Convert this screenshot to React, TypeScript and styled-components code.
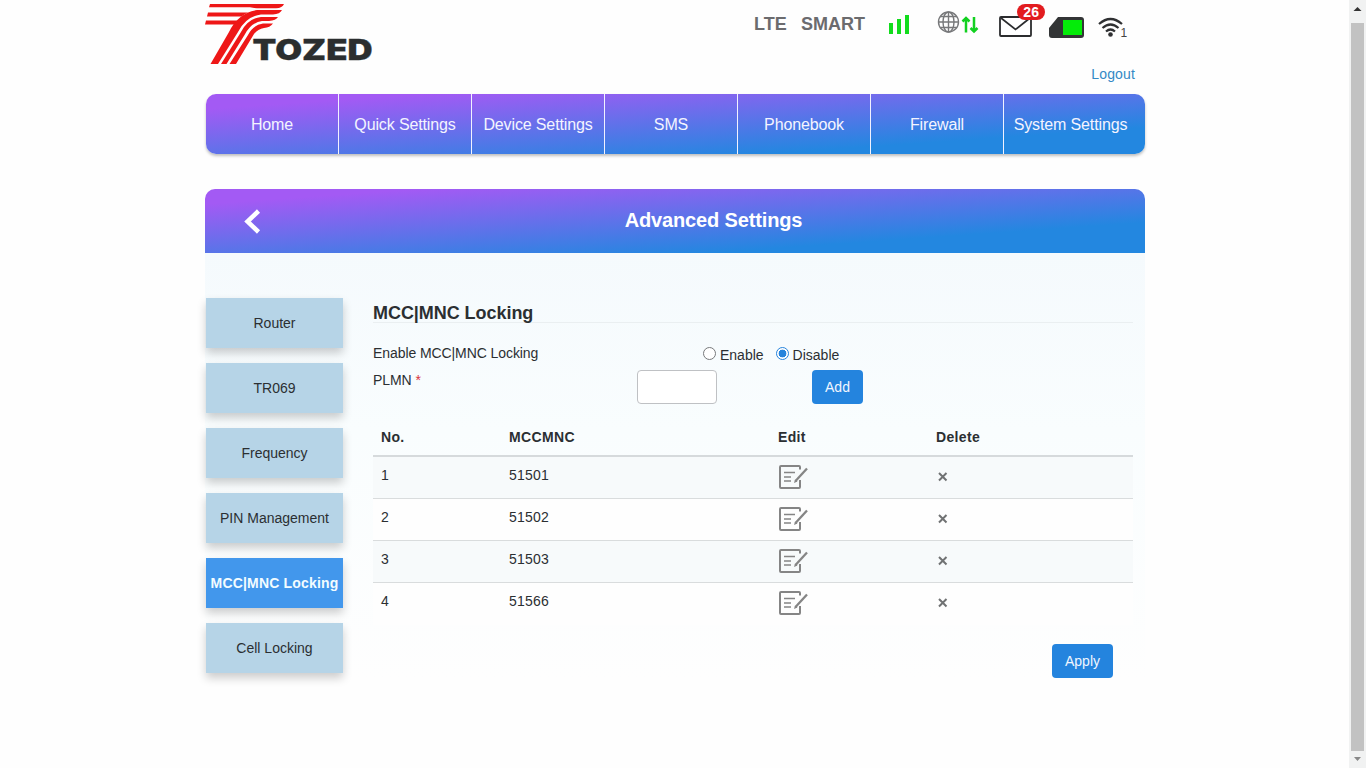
import React, { useState } from "react";
import styled, { createGlobalStyle, css } from "styled-components";

const GlobalStyle = createGlobalStyle`
  * { box-sizing: border-box; }
  body {
    margin: 0;
    background: #fefefe;
    color: #2b2f32;
    font: 14px/20px "Liberation Sans", Arial, sans-serif;
    overflow: hidden;
  }
`;

const Window = styled.div`
  display: flex;
  height: 768px;
`;
const Page = styled.div`
  flex: 1;
`;
const Container = styled.div`
  width: 940px;
  margin-left: 205px;
`;

/* Scroll bar */
const ScrollTrack = styled.div`
  width: 17px;
  height: 768px;
  padding: 0 2px;
  background: #f1f2f2;
  display: flex;
  flex-direction: column;
  align-items: center;
`;
const ScrollArrow = styled.svg<{ $h: number }>`
  display: block;
  width: 13px;
  height: ${(p) => p.$h}px;
  flex: none;
`;
const ScrollThumb = styled.div`
  width: 13px;
  flex: 1;
  background: #c2c2c2;
`;

/* Header */
const Header = styled.header`
  height: 94px;
  display: flex;
  justify-content: space-between;
`;
const Logo = styled.svg`
  display: block;
  width: 170px;
  height: 70px;
`;
const HeaderSide = styled.div`
  display: flex;
  flex-direction: column;
  width: 391px;
`;
const StatusBar = styled.div`
  display: flex;
  height: 64px;
`;
const Network = styled.span<{ $w: number }>`
  width: ${(p) => p.$w}px;
  padding-top: 14px;
  font-size: 18px;
  font-weight: 700;
  color: #6b6b6e;
  white-space: nowrap;
`;
const StatusIcons = styled.svg`
  display: block;
  width: 250px;
  height: 46px;
`;
const Logout = styled.a`
  align-self: flex-end;
  margin-right: 10px;
  font-size: 14px;
  letter-spacing: 0.15px;
  color: #3389c5;
`;

const brandGradient = css`
  background: linear-gradient(176deg, #a35af4 15px, #2387e0 99px);
`;

/* Navigation */
const Nav = styled.nav`
  ${brandGradient}
  display: flex;
  height: 60px;
  margin-left: 1px;
  border-radius: 10px;
  box-shadow: 0 2px 3px rgba(0, 0, 0, 0.25);
`;
const NavItem = styled.a`
  width: 133px;
  padding-top: 21px;
  text-align: center;
  font-size: 16px;
  letter-spacing: -0.13px;
  color: #f4f4ff;
  white-space: nowrap;
  border-right: 1px solid #f2f2ff;
  &:last-child { border-right: 0; }
`;

/* Panel */
const Panel = styled.section`
  margin-top: 35px;
  height: 560px;
  background: linear-gradient(#f5fafd 64px, #f9fdfe 240px, #fefefe 490px);
  border-radius: 10px 10px 0 0;
`;
const PanelHeader = styled.div`
  ${brandGradient}
  height: 64px;
  border-radius: 10px 10px 0 0;
  display: flex;
  padding-left: 39px;
`;
const BackIcon = styled.svg`
  width: 17px;
  height: 64px;
`;
const PanelTitle = styled.h1`
  margin: 0;
  flex: 1;
  padding: 20px 0 0 21px;
  text-align: center;
  font-size: 20px;
  line-height: 23px;
  letter-spacing: -0.15px;
  color: #fff;
`;
const Body = styled.div`
  display: flex;
  padding: 45px 12px 0 1px;
  gap: 30px;
`;
const Sidebar = styled.div`
  width: 137px;
  display: flex;
  flex-direction: column;
  gap: 15px;
`;
const SideItem = styled.a<{ $active: boolean }>`
  height: 50px;
  line-height: 50px;
  text-align: center;
  white-space: nowrap;
  letter-spacing: ${(p) => (p.$active ? 0.17 : 0)}px;
  background: ${(p) => (p.$active ? "#4297ec" : "#b6d4e7")};
  color: ${(p) => (p.$active ? "#f2fcff" : "#2b2f32")};
  font-weight: ${(p) => (p.$active ? 700 : 400)};
  box-shadow: 0 5px 9px rgba(0, 0, 0, 0.2);
`;
const Content = styled.div`
  width: 760px;
`;
const Title = styled.h2`
  margin: 0;
  height: 25px;
  padding-top: 3px;
  font-size: 18px;
  line-height: 24px;
  letter-spacing: -0.05px;
  border-bottom: 1px solid #eaeff1;
`;
const FormRow = styled.div<{ $h: number; $top: number }>`
  display: flex;
  height: ${(p) => p.$h}px;
  margin-top: ${(p) => p.$top}px;
`;
const Label = styled.label<{ $w: number }>`
  width: ${(p) => p.$w}px;
  letter-spacing: -0.08px;
`;
const Required = styled.span`
  color: #d9363e;
`;
const Option = styled.label`
  display: flex;
  gap: 4px;
  margin-right: 12px;
  padding-top: 2px;
`;
const Radio = styled.span<{ $checked: boolean }>`
  width: 13px;
  height: 13px;
  margin-top: 2px;
  border-radius: 50%;
  border: 1px solid ${(p) => (p.$checked ? "#2684dc" : "#77797b")};
  background: ${(p) => (p.$checked ? "radial-gradient(circle, #2684dc 3.6px, #fff 4.2px)" : "#fff")};
`;
const PlmnInput = styled.input`
  width: 80px;
  height: 34px;
  border: 1px solid #bfc1c4;
  border-radius: 4px;
  background: #fff;
  margin-right: 95px;
`;
const Button = styled.button<{ $w: number }>`
  width: ${(p) => p.$w}px;
  height: 34px;
  padding: 0;
  border: 0;
  border-radius: 4px;
  background: #2484de;
  color: #f0f6ff;
  font: 14px "Liberation Sans", Arial, sans-serif;
`;
const Table = styled.table`
  width: 760px;
  margin-top: 14px;
  table-layout: fixed;
  border-collapse: separate;
  border-spacing: 0;
`;
const Th = styled.th<{ $w: number }>`
  width: ${(p) => p.$w}px;
  height: 39px;
  padding: 9px 8px 8px;
  text-align: left;
  letter-spacing: 0.35px;
  border-bottom: 2px solid #d6dadc;
`;
const Row = styled.tr`
  &:nth-child(odd) { background: #f7fafb; }
  &:nth-child(even) { background: #fefefe; }
  &:last-child td { border-bottom-color: transparent; }
`;
const Td = styled.td`
  height: 42px;
  padding: 8px 8px 0;
  vertical-align: top;
  letter-spacing: 0.2px;
  border-bottom: 1px solid #d9dcdd;
`;
const IconTd = styled(Td)`
  padding-top: 7px;
`;
const CellIcon = styled.svg`
  display: block;
`;
const Footer = styled.div`
  display: flex;
  justify-content: flex-end;
  margin-top: 19px;
  padding-right: 20px;
`;

const navItems = ["Home", "Quick Settings", "Device Settings", "SMS", "Phonebook", "Firewall", "System Settings"];
const sideItems = ["Router", "TR069", "Frequency", "PIN Management", "MCC|MNC Locking", "Cell Locking"];
const codes = ["51501", "51502", "51503", "51566"];

const TozedLogo = () => (
  <Logo viewBox="0 0 170 70">
    <g fill="#ee1717">
      <path d="M5 4H79Q77.500 8 71 8.300H55Q49 8.300 45 7.300H4Z" />
      <path d="M3 12.600H43Q39 14.500 36.500 16.500H2Z" />
      <path d="M1 20.600H32.500L30.500 24.600H0Z" />
      <path d="M5.500 64L24 32Q33 13 52 10H77Q75 14 68 14.500H56Q41 16.500 33 32L13 64Z" />
      <path d="M16 64L36 32Q43 18.500 56 17H73Q71 20.500 64 21H57Q46 22.500 39.500 35L21.500 64Z" />
      <path d="M24.500 64L43 35Q48 25 58 23.500H68Q65 27.500 59 28Q53 29 49 34L31 64Z" />
    </g>
    <text x="47.500" y="59.500" fill="#2b2e2f" stroke="#2b2e2f" strokeWidth="0.300" fontFamily="Inter, sans-serif" fontWeight="900" fontSize="28" textLength="120" lengthAdjust="spacingAndGlyphs">TOZED</text>
  </Logo>
);

/* Signal, internet, messages, SIM and Wi-Fi state */
const Status = () => (
  <StatusIcons viewBox="885 0 250 46">
    <g fill="#12dc1d">
      <rect x="889" y="23" width="4" height="11" />
      <rect x="897" y="19" width="4" height="15" />
      <rect x="905" y="15" width="4" height="19" />
    </g>
    <g fill="none" stroke="#77787a" strokeWidth="1.400">
      <circle cx="948.500" cy="22" r="10" />
      <ellipse cx="948.500" cy="22" rx="5.500" ry="10" />
      <path d="M948.500 12V32M938.500 22H958.500M940.500 16.500H956.500M940.500 27.500H956.500" />
    </g>
    <g fill="none" stroke="#12d020" strokeWidth="2.500">
      <path d="M966 32.500V19M962.500 21.500L966 18L969.500 21.500" />
      <path d="M974 17V31M970.500 28L974 31.500L977.500 28" />
    </g>
    <rect x="1000" y="17" width="31" height="19" rx="1" fill="#fff" stroke="#2b2c2e" strokeWidth="1.800" />
    <path d="M1001 18L1015.500 29.500L1030 18" fill="none" stroke="#2b2c2e" strokeWidth="1.700" />
    <rect x="1017" y="4" width="28" height="16" rx="8" fill="#e21c1f" />
    <text x="1031.300" y="17" textAnchor="middle" fontSize="14" fontWeight="700" fill="#fff" letterSpacing="0.300">26</text>
    <path d="M1058 17H1081Q1084 17 1084 20V35Q1084 38 1081 38H1052Q1049 38 1049 35V28Z" fill="#333536" />
    <rect x="1063" y="20" width="19" height="15" fill="#04ec09" />
    <g fill="none" stroke="#2f3032" strokeWidth="2.200">
      <path d="M1099 24Q1110.500 14 1122 24" />
      <path d="M1102.500 28Q1110.500 21 1118.500 28" />
      <path d="M1106 31.500Q1110.500 27.500 1115 31.500" />
    </g>
    <circle cx="1110.500" cy="34.500" r="2.300" fill="#2f3032" />
    <text x="1120.500" y="37" fontSize="12" fill="#444">1</text>
  </StatusIcons>
);

const EditIcon = () => (
  <CellIcon width="32" height="26" viewBox="0 0 32 26" fill="none" stroke="#858585">
    <path d="M22 5.500V3Q22 2 21 2H3Q2 2 2 3V23Q2 24 3 24H21Q22 24 22 23V16" strokeWidth="2" />
    <path d="M6 8.500H17M6 13H13M6 17H13" strokeWidth="1.700" />
    <path d="M17.500 17L29 4.500" strokeWidth="2.300" />
    <path d="M16 19L17 15.500L19.500 17.500Z" fill="#858585" stroke="none" />
  </CellIcon>
);

const DeleteIcon = () => (
  <CellIcon width="14" height="26" viewBox="0 0 14 26" fill="none" stroke="#707273" strokeWidth="2">
    <path d="M3 9L10.500 16.500M10.500 9L3 16.500" />
  </CellIcon>
);

export default function App() {
  const [locked, setLocked] = useState(false);
  return (
    <Window>
      <GlobalStyle />
      <Page>
        <Container>
          <Header>
            <TozedLogo />
            <HeaderSide>
              <StatusBar>
                <Network $w={47}>LTE</Network>
                <Network $w={84}>SMART</Network>
                <Status />
              </StatusBar>
              <Logout>Logout</Logout>
            </HeaderSide>
          </Header>
          <Nav>
            {navItems.map((item) => (
              <NavItem key={item}>{item}</NavItem>
            ))}
          </Nav>
          <Panel>
            <PanelHeader>
              <BackIcon viewBox="0 0 17 64">
                <path d="M14.500 22L3.500 32.500L14.500 43" fill="none" stroke="#fff" strokeWidth="4.500" />
              </BackIcon>
              <PanelTitle>Advanced Settings</PanelTitle>
            </PanelHeader>
            <Body>
              <Sidebar>
                {sideItems.map((item) => (
                  <SideItem key={item} $active={item === "MCC|MNC Locking"}>{item}</SideItem>
                ))}
              </Sidebar>
              <Content>
                <Title>MCC|MNC Locking</Title>
                <FormRow $h={27} $top={20}>
                  <Label $w={330}>Enable MCC|MNC Locking</Label>
                  <Option onClick={() => setLocked(true)}>
                    <Radio $checked={locked} />
                    Enable
                  </Option>
                  <Option onClick={() => setLocked(false)}>
                    <Radio $checked={!locked} />
                    Disable
                  </Option>
                </FormRow>
                <FormRow $h={34} $top={0}>
                  <Label $w={264}>PLMN <Required>*</Required></Label>
                  <PlmnInput />
                  <Button $w={51}>Add</Button>
                </FormRow>
                <Table>
                  <thead>
                    <tr>
                      <Th $w={128}>No.</Th>
                      <Th $w={269}>MCCMNC</Th>
                      <Th $w={158}>Edit</Th>
                      <Th $w={205}>Delete</Th>
                    </tr>
                  </thead>
                  <tbody>
                    {codes.map((code, i) => (
                      <Row key={code}>
                        <Td>{i + 1}</Td>
                        <Td>{code}</Td>
                        <IconTd><EditIcon /></IconTd>
                        <IconTd><DeleteIcon /></IconTd>
                      </Row>
                    ))}
                  </tbody>
                </Table>
                <Footer>
                  <Button $w={61}>Apply</Button>
                </Footer>
              </Content>
            </Body>
          </Panel>
        </Container>
      </Page>
      <ScrollTrack>
        <ScrollArrow $h={23} viewBox="0 0 13 23"><path d="M2.500 11L6.500 7L10.500 11Z" fill="#333" /></ScrollArrow>
        <ScrollThumb />
        <ScrollArrow $h={17} viewBox="0 0 13 17"><path d="M3 6L6.500 10L10 6Z" fill="#888" /></ScrollArrow>
      </ScrollTrack>
    </Window>
  );
}
